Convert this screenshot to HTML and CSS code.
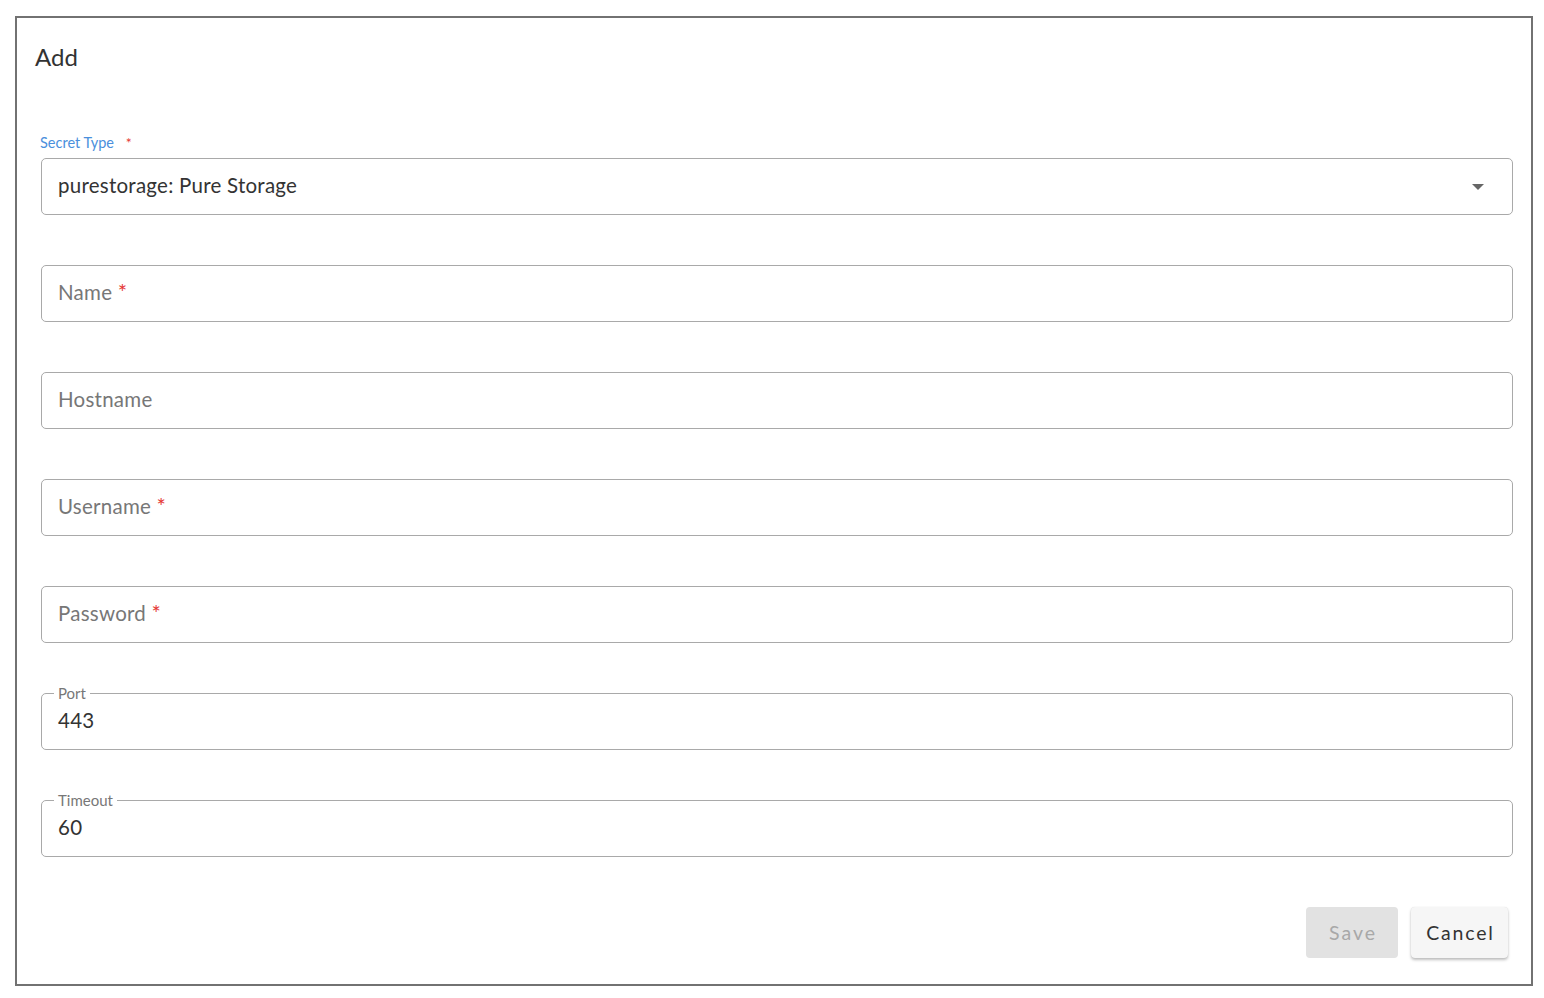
FILE: index.html
```html
<!DOCTYPE html>
<html>
<head>
<meta charset="utf-8">
<link rel="stylesheet" href="styles.css">
</head>
<body>
<div class="dialog">
  <div class="title">Add</div>
  <div class="form">
    <div class="select-group">
      <div class="select-label">Secret Type <span class="req">*</span></div>
      <div class="field select">
        <span class="value">purestorage: Pure Storage</span>
        <svg class="arrow" width="14" height="8" viewBox="0 0 14 8"><path d="M1 1 L13 1 L7 7 Z" fill="#666"/></svg>
      </div>
    </div>
    <div class="field"><span class="placeholder">Name <span class="req">*</span></span></div>
    <div class="field"><span class="placeholder">Hostname</span></div>
    <div class="field"><span class="placeholder">Username <span class="req">*</span></span></div>
    <div class="field"><span class="placeholder">Password <span class="req">*</span></span></div>
    <div class="field notched"><span class="legend">Port</span><span class="value">443</span></div>
    <div class="field notched"><span class="legend">Timeout</span><span class="value">60</span></div>
  </div>
  <div class="actions">
    <button class="btn save" disabled>Save</button>
    <button class="btn cancel">Cancel</button>
  </div>
</div>
</body>
</html>
```
FILE: styles.css
```css
html, body {
  margin: 0;
  padding: 0;
  background: #fff;
  font-family: "Lato", "Noto Sans", sans-serif;
}
.dialog {
  box-sizing: border-box;
  margin: 16px 0 0 15px;
  width: 1518px;
  height: 970px;
  border: 2px solid #727272;
  padding: 24px 18px 0 24px;
}
.title {
  font-size: 24px;
  line-height: 30px;
  color: #333;
  margin-left: -6px;
}
.form {
  display: flex;
  flex-direction: column;
  gap: 50px;
  margin-top: 63px;
}
.select-group {
  display: flex;
  flex-direction: column;
  gap: 7px;
}
.select-label {
  font-size: 14.5px;
  line-height: 16px;
  color: #4a8fdc;
  margin-left: -1px;
}
.select-label .req {
  margin-left: 8px;
  font-size: 14px;
}
.req {
  color: #e53935;
  font-size: 22px;
  line-height: 10px;
}
.field {
  position: relative;
  box-sizing: border-box;
  height: 57px;
  border: 1.5px solid #a9a9a9;
  border-radius: 5px;
  display: flex;
  align-items: center;
  padding: 0 16px 3px 16px;
  font-size: 20.5px;
  letter-spacing: 0.25px;
}
.select {
  justify-content: space-between;
  padding-right: 27px;
}
.arrow {
  margin-top: 3px;
}
.value {
  color: #333;
}
.placeholder {
  color: #777;
}
.legend {
  position: absolute;
  top: -10px;
  left: 12px;
  padding: 0 4px;
  background: #fff;
  font-size: 15px;
  line-height: 18px;
  letter-spacing: 0;
  color: #777;
}
.actions {
  display: flex;
  justify-content: flex-end;
  gap: 13px;
  margin-top: 50px;
  padding-right: 5px;
}
.btn {
  font-family: "Lato", "Noto Sans", sans-serif;
  font-size: 19.5px;
  letter-spacing: 2px;
  height: 51px;
  border: none;
  border-radius: 4px;
  padding: 0 13px 0 15px;
}
.save {
  width: 92px;
  background: #e2e2e2;
  color: #a8a8a8;
}
.cancel {
  width: 97px;
  background: #f6f6f6;
  color: #333;
  letter-spacing: 1.8px;
  box-shadow: 0 2px 3px rgba(0,0,0,0.25), 0 0 1px rgba(0,0,0,0.15);
}
```
